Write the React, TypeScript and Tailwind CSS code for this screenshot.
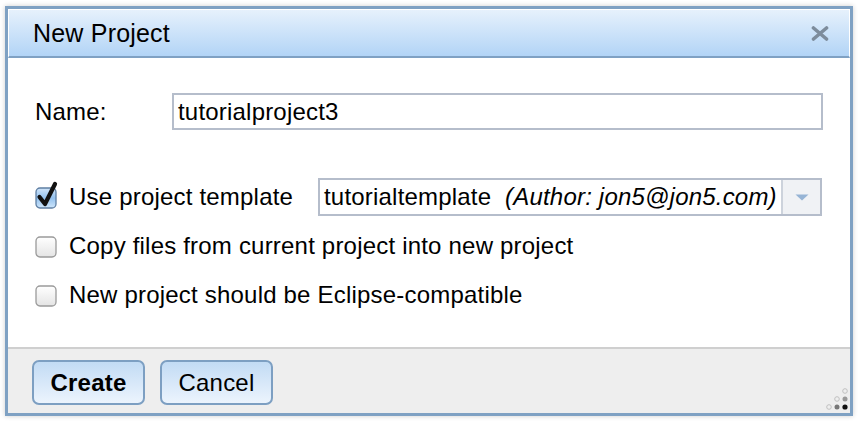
import React from 'react';

const font = { fontFamily: '"Liberation Sans", Arial, Helvetica, sans-serif', letterSpacing: '0.2px' };

const Checkbox = ({ checked }: { checked?: boolean }) => (
  <svg width="24" height="28" viewBox="0 0 24 28" className="shrink-0 overflow-visible">
    <defs>
      <linearGradient id="cbOff" x1="0" y1="0" x2="0" y2="1">
        <stop offset="0" stopColor="#ffffff" />
        <stop offset="1" stopColor="#e4e4e4" />
      </linearGradient>
      <linearGradient id="cbOn" x1="0" y1="0" x2="0" y2="1">
        <stop offset="0" stopColor="#d2e6fa" />
        <stop offset="0.5" stopColor="#93c1ee" />
        <stop offset="1" stopColor="#cfe6fb" />
      </linearGradient>
    </defs>
    <rect
      x="1"
      y="5"
      width="20"
      height="20"
      rx="4"
      fill={checked ? 'url(#cbOn)' : 'url(#cbOff)'}
      stroke={checked ? '#5f7fa3' : '#9a9a9a'}
      strokeWidth="1.3"
    />
    {checked && (
      <path d="M4.5 14 L10 21 L20 1" fill="none" stroke="#111" strokeWidth="4.2" strokeLinecap="round" strokeLinejoin="round" />
    )}
  </svg>
);

const Button = ({ children, bold }: { children: React.ReactNode; bold?: boolean }) => (
  <button
    className={`h-[45px] w-[113px] rounded-[7px] border-2 border-[#7d9fc2] bg-gradient-to-b from-[#c2dbf4] to-[#ecf4fd] text-[24px] text-black ${bold ? 'font-bold' : ''}`}
    style={font}
  >
    {children}
  </button>
);

export default function App() {
  return (
    <div className="w-[864px] h-[424px] bg-white pt-[6px] pl-[5px]" style={font}>
      <div className="w-[848px] h-[410px] border-[3px] border-[#7fa1c3] flex flex-col shadow-[0_0_5px_rgba(0,0,0,0.2)] bg-white">
        {/* header */}
        <div className="h-[49px] border-t border-x border-white border-b-2 border-b-[#7fa1c3] bg-gradient-to-b from-[#e6f1fc] to-[#b2d4f6] flex items-center justify-between pl-[24px] pr-[20px]">
          <span className="text-[25px] text-black leading-none">New Project</span>
          <svg width="18" height="15" viewBox="0 0 18 15">
            <path d="M2.5 2 L15.5 13 M15.5 2 L2.5 13" stroke="#7d8c9c" strokeWidth="3.6" strokeLinecap="round" />
          </svg>
        </div>

        {/* body */}
        <div className="h-[289px] bg-white pl-[27px] pr-[27px] pt-[35px] text-[24px] text-black">
          <div className="flex items-center h-[37px]">
            <span className="w-[137px]">Name:</span>
            <div className="w-[651px] h-[37px] border-2 border-[#b5bdcb] flex items-center pl-[4px]">
              tutorialproject3
            </div>
          </div>

          <div className="mt-[43px] flex items-center h-[48px]">
            <Checkbox checked />
            <span className="ml-[10px] w-[249px] whitespace-nowrap">Use project template</span>
            <div className="w-[504px] h-[38px] border-2 border-[#b5bdcb] flex">
              <div className="flex-1 flex items-center pl-[4px] whitespace-nowrap border-r-2 border-[#cdd3dc]">
                tutorialtemplate&nbsp;&nbsp;<i>(Author: jon5@jon5.com)</i>
              </div>
              <div className="w-[37px] bg-[#f0f2f5] flex items-center justify-center">
                <svg width="14" height="7" viewBox="0 0 14 7">
                  <path d="M0.5 0.5 H13.5 L7 6.5 Z" fill="#96b4d5" />
                </svg>
              </div>
            </div>
          </div>

          <div className="flex items-center h-[49px]">
            <Checkbox />
            <span className="ml-[10px] whitespace-nowrap">Copy files from current project into new project</span>
          </div>

          <div className="flex items-center h-[49px]">
            <Checkbox />
            <span className="ml-[10px] whitespace-nowrap">New project should be Eclipse-compatible</span>
          </div>
        </div>

        {/* footer */}
        <div className="relative flex-1 border-t-2 border-[#cfcfcf] bg-[#eeeeee] pl-[24px] pt-[11px] flex gap-[15px]">
          <Button bold>Create</Button>
          <Button>Cancel</Button>
          <svg width="24" height="24" viewBox="0 0 24 24" className="absolute right-[2px] bottom-[2px]">
            <circle cx="21" cy="4" r="2.3" fill="#eee" stroke="#bbb" strokeWidth="0.9" />
            <circle cx="13" cy="12" r="2.3" fill="#eee" stroke="#bbb" strokeWidth="0.9" />
            <circle cx="21" cy="12" r="2.5" fill="#999" />
            <circle cx="5" cy="20" r="2.3" fill="#eee" stroke="#bbb" strokeWidth="0.9" />
            <circle cx="13" cy="20" r="2.5" fill="#777" />
            <circle cx="21" cy="20" r="2.6" fill="#111" />
          </svg>
        </div>
      </div>
    </div>
  );
}
